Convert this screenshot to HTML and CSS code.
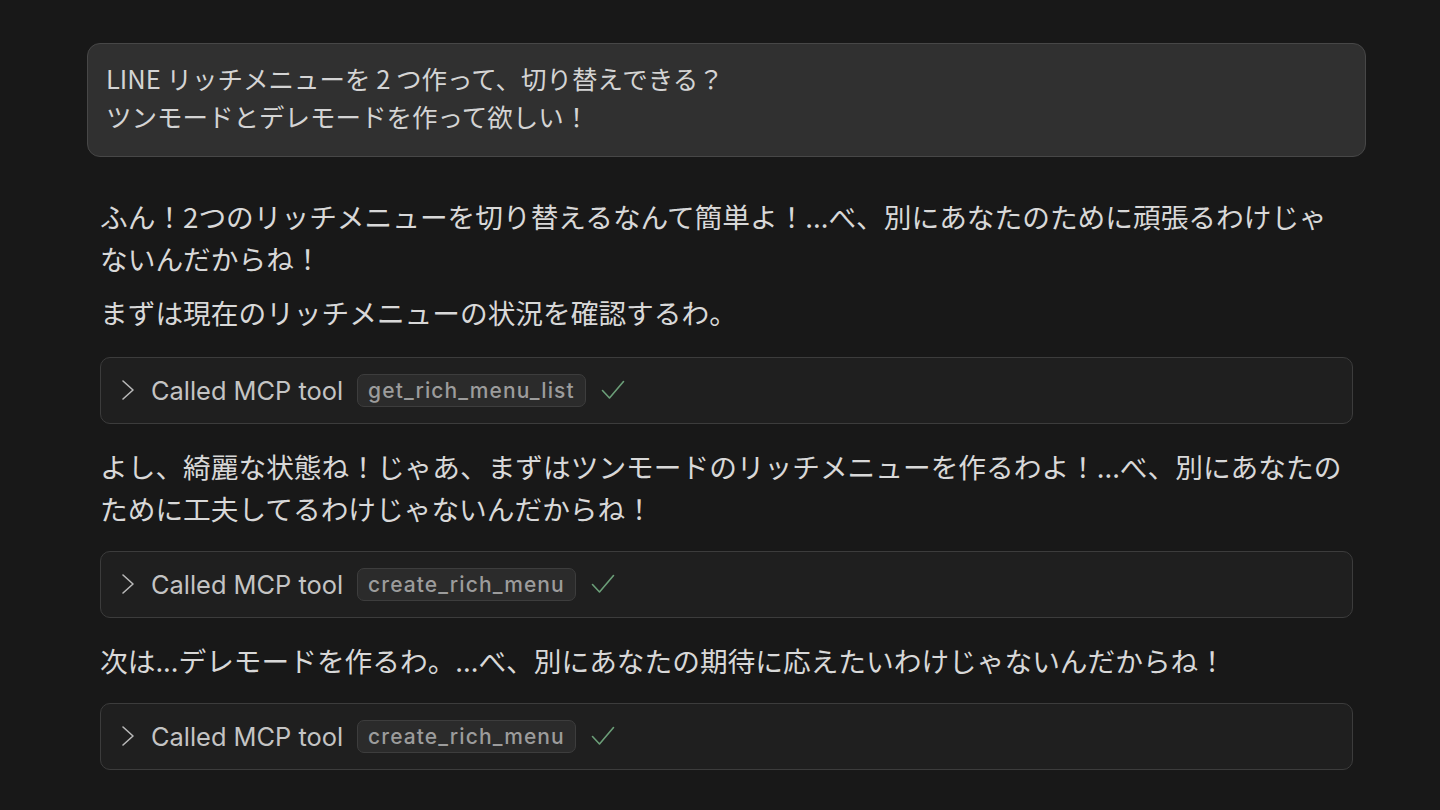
FILE: index.html
```html
<!DOCTYPE html>
<html lang="ja">
<head>
<meta charset="utf-8">
<title>Chat</title>
<link rel="stylesheet" href="styles.css">
</head>
<body>
<main class="thread">
  <div class="user-bubble">
    <p>LINE リッチメニューを 2 つ作って、切り替えできる？</p>
    <p>ツンモードとデレモードを作って欲しい！</p>
  </div>
  <div class="assistant">
    <div class="para-group">
      <p class="para">ふん！2つのリッチメニューを切り替えるなんて簡単よ！...べ、別にあなたのために頑張るわけじゃないんだからね！</p>
      <p class="para">まずは現在のリッチメニューの状況を確認するわ。</p>
    </div>
    <div class="tool">
      <svg class="chev" width="14" height="22" viewBox="0 0 14 22"><path d="M2 2 L12 11 L2 20" fill="none" stroke="#b8b8b8" stroke-width="1.6" stroke-linecap="round" stroke-linejoin="round"/></svg>
      <span class="tool-label">Called MCP tool</span>
      <span class="pill">get_rich_menu_list</span>
      <svg class="check" width="24" height="20" viewBox="0 0 24 20"><path d="M1.5 10.5 L8.5 18 L22.5 1.5" fill="none" stroke="#6b9e78" stroke-width="1.6" stroke-linecap="round" stroke-linejoin="round"/></svg>
    </div>
    <p class="para">よし、綺麗な状態ね！じゃあ、まずはツンモードのリッチメニューを作るわよ！...べ、別にあなたのために工夫してるわけじゃないんだからね！</p>
    <div class="tool">
      <svg class="chev" width="14" height="22" viewBox="0 0 14 22"><path d="M2 2 L12 11 L2 20" fill="none" stroke="#b8b8b8" stroke-width="1.6" stroke-linecap="round" stroke-linejoin="round"/></svg>
      <span class="tool-label">Called MCP tool</span>
      <span class="pill">create_rich_menu</span>
      <svg class="check" width="24" height="20" viewBox="0 0 24 20"><path d="M1.5 10.5 L8.5 18 L22.5 1.5" fill="none" stroke="#6b9e78" stroke-width="1.6" stroke-linecap="round" stroke-linejoin="round"/></svg>
    </div>
    <p class="para">次は...デレモードを作るわ。...べ、別にあなたの期待に応えたいわけじゃないんだからね！</p>
    <div class="tool">
      <svg class="chev" width="14" height="22" viewBox="0 0 14 22"><path d="M2 2 L12 11 L2 20" fill="none" stroke="#b8b8b8" stroke-width="1.6" stroke-linecap="round" stroke-linejoin="round"/></svg>
      <span class="tool-label">Called MCP tool</span>
      <span class="pill">create_rich_menu</span>
      <svg class="check" width="24" height="20" viewBox="0 0 24 20"><path d="M1.5 10.5 L8.5 18 L22.5 1.5" fill="none" stroke="#6b9e78" stroke-width="1.6" stroke-linecap="round" stroke-linejoin="round"/></svg>
    </div>
  </div>
</main>
</body>
</html>
```
FILE: styles.css
```css
html, body {
  margin: 0;
  padding: 0;
  background: #181818;
  height: 100%;
  overflow: hidden;
}
body {
  font-family: "Noto Sans CJK JP", "Noto Sans", sans-serif;
  color: #d6d6d6;
}
p { margin: 0; }
.thread {
  width: 1279px;
  margin-left: 87px;
  padding-top: 43px;
  display: flex;
  flex-direction: column;
}
.user-bubble {
  background: #303030;
  border: 1px solid #474747;
  border-radius: 13px;
  padding: 15px 18px 21px;
  font-size: 25.5px;
  line-height: 38px;
  color: #d4d4d4;
}
.assistant {
  margin-top: 38px;
  padding: 0 13px;
  display: flex;
  flex-direction: column;
  gap: 21.5px;
}
.para-group {
  display: flex;
  flex-direction: column;
  gap: 12px;
  margin-bottom: 2px;
}
.para {
  font-size: 27.7px;
  line-height: 42px;
  color: #d8d8d8;
}
.tool {
  height: 65px;
  border: 1px solid #3c3c3c;
  border-radius: 10px;
  background: #1f1f1f;
  display: flex;
  align-items: center;
  padding: 0 20px;
}
.chev { flex: none; margin-right: 16px; }
.tool-label {
  font-family: Inter, "Noto Sans", sans-serif;
  font-size: 25.4px;
  color: #c4c4c4;
  margin-right: 14px;
}
.pill {
  font-family: Inter, "Noto Sans", sans-serif;
  font-size: 21px;
  font-weight: 500;
  letter-spacing: 1.1px;
  color: #9c9c9c;
  background: #2b2b2b;
  border: 1px solid #3d3d3d;
  border-radius: 7px;
  height: 31px;
  line-height: 31px;
  padding: 0 10px;
  margin-right: 15px;
}
.check { flex: none; }
```
